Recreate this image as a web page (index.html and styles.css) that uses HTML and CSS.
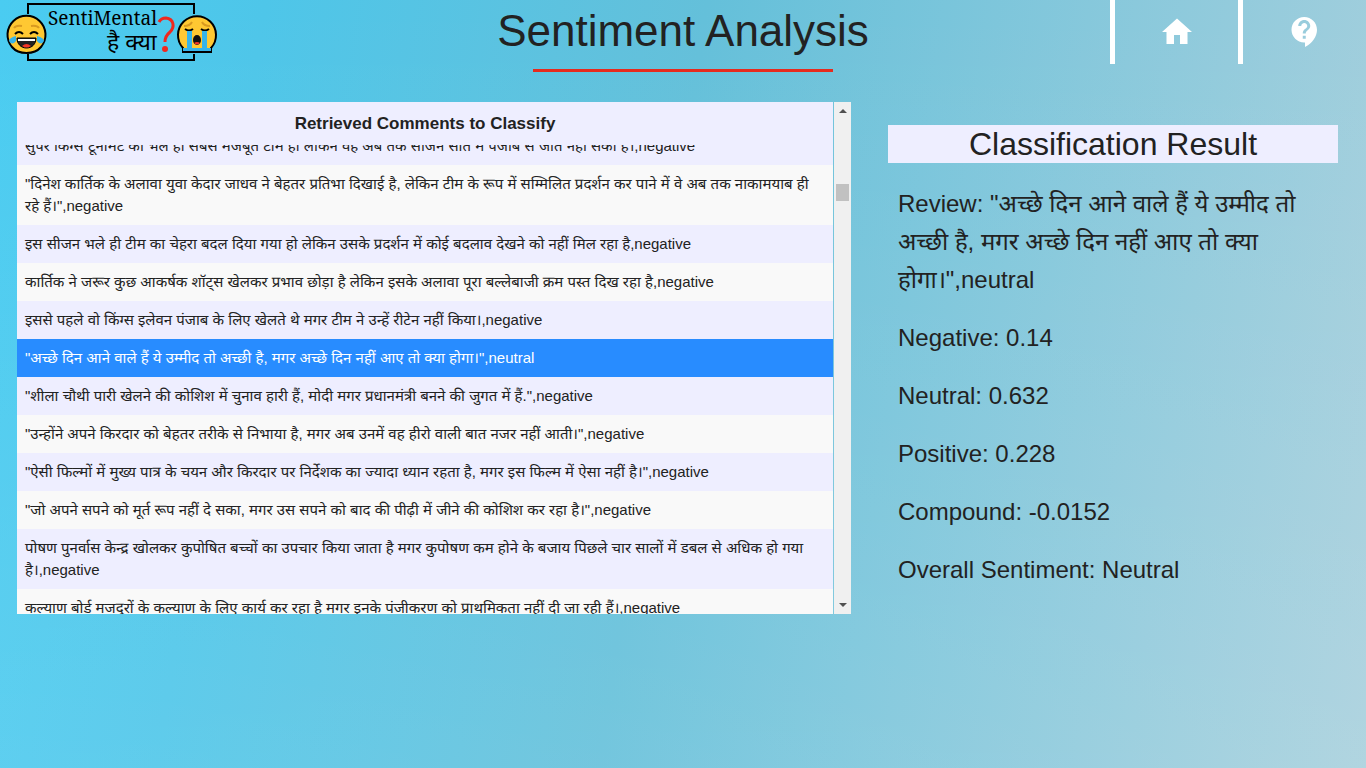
FILE: index.html
```html
<!DOCTYPE html>
<html lang="hi">
<head>
<meta charset="utf-8">
<title>Sentiment Analysis</title>
<link rel="stylesheet" href="styles.css">
</head>
<body>
<header class="topbar">
  <a class="logo" href="#" aria-label="SentiMental है क्या?">
    <svg class="logo-art" viewBox="0 0 220 66" width="220" height="66">
      <path d="M28 14V4H194V14M28 54V60H194V54" fill="none" stroke="#000" stroke-width="2"/>
      <path d="M12 47A19 19 0 1 1 41 47Q36 53 26.500 53T12 47Z" fill="#ffc832" stroke="#000" stroke-width="2"/>
      <path d="M17 38H36C36 44 32 48 26.500 48S17 44 17 38Z" fill="#222" stroke="#000" stroke-width="1"/>
      <path d="M22 46Q26.500 42 31 46Q26.500 49 22 46Z" fill="#f33527"/>
      <path d="M18 39H35V41H18Z" fill="#fff"/>
      <path d="M14 28Q16 25 22 26M31 26Q37 25 39 28" fill="none" stroke="#d99a20" stroke-width="2"/>
      <path d="M15 34Q19 30 23 34M30 34Q34 30 38 34" fill="none" stroke="#000" stroke-width="2"/>
      <path d="M16 36Q9 38 9 41Q12 46 16 41ZM37 36Q44 38 44 41Q41 46 37 41Z" fill="#36b4ea"/>
      <path d="M183 48A19 19 0 1 1 211 48V52H183Z" fill="#ffc832" stroke="#000" stroke-width="2"/>
      <path d="M184 26Q190 26 192 22M202 22Q204 26 210 26" fill="none" stroke="#d99a20" stroke-width="2"/>
      <path d="M185 29Q189 32 193 29M201 29Q205 32 209 29" fill="none" stroke="#000" stroke-width="2"/>
      <path d="M187 31H192V50H187ZM202 31H207V50H202Z" fill="#36b4ea"/>
      <path d="M183 48H211V51H183Z" fill="#36b4ea"/>
      <ellipse cx="197" cy="40" rx="4" ry="5" fill="#111"/>
      <path d="M194 43Q197 41 200 43Q197 46 194 43Z" fill="#f33527"/>
      <path d="M182 52H212" stroke="#000" stroke-width="2"/>
      <path d="M159 22Q161 18 166 18C174 19 175 27 170 32Q165 36 165 42" fill="none" stroke="#f0281e" stroke-width="3"/>
      <circle cx="165" cy="49" r="3" fill="#f0281e"/>
      <text class="logo-name" x="48" y="25">SentiMental</text>
      <text class="logo-tag" x="107" y="50">है क्या</text>
    </svg>
  </a>
  <h1 class="title">Sentiment Analysis</h1>
  <nav class="nav">
    <a class="nav-link" href="#" aria-label="Home"><svg viewBox="0 0 24 24" width="36" height="36"><path fill="#fff" d="M10 20v-6h4v6h5v-8h3L12 3 2 12h3v8z"/></svg></a>
    <a class="nav-link" href="#" aria-label="Help"><svg viewBox="0 0 24 24" width="36" height="36"><path fill="#fff" d="M11.500 2C6.810 2 3 5.810 3 10.500S6.810 19 11.500 19h.5v3c4.860-2.340 8-7 8-11.500C20 5.810 16.190 2 11.500 2zm1 14.500h-2v-2h2v2zm0-3.500h-2c0-3.250 3-3 3-5 0-1.100-.9-2-2-2s-2 .9-2 2h-2c0-2.210 1.790-4 4-4s4 1.790 4 4c0 2.500-3 2.750-3 5z"/></svg></a>
  </nav>
</header>
<main class="content">
  <section class="comments">
    <div class="scroller" id="scroller">
      <table class="table">
        <thead><tr><th>Retrieved Comments to Classify</th></tr></thead>
        <tbody>
          <tr><td>सुपर किंग्स टूर्नामेंट की भले ही सबसे मजबूत टीम हो लेकिन वह अब तक सीजन सात में पंजाब से जीत नहीं सकी है।,negative</td></tr>
          <tr><td>"दिनेश कार्तिक के अलावा युवा केदार जाधव ने बेहतर प्रतिभा दिखाई है, लेकिन टीम के रूप में सम्मिलित प्रदर्शन कर पाने में वे अब तक नाकामयाब ही रहे हैं।",negative</td></tr>
          <tr><td>इस सीजन भले ही टीम का चेहरा बदल दिया गया हो लेकिन उसके प्रदर्शन में कोई बदलाव देखने को नहीं मिल रहा है,negative</td></tr>
          <tr><td>कार्तिक ने जरूर कुछ आकर्षक शॉट्स खेलकर प्रभाव छोड़ा है लेकिन इसके अलावा पूरा बल्लेबाजी क्रम पस्त दिख रहा है,negative</td></tr>
          <tr><td>इससे पहले वो किंग्स इलेवन पंजाब के लिए खेलते थे मगर टीम ने उन्हें रीटेन नहीं किया।,negative</td></tr>
          <tr class="selected"><td>"अच्छे दिन आने वाले हैं ये उम्मीद तो अच्छी है, मगर अच्छे दिन नहीं आए तो क्या होगा।",neutral</td></tr>
          <tr><td>"शीला चौथी पारी खेलने की कोशिश में चुनाव हारी हैं, मोदी मगर प्रधानमंत्री बनने की जुगत में हैं.",negative</td></tr>
          <tr><td>"उन्होंने अपने किरदार को बेहतर तरीके से निभाया है, मगर अब उनमें वह हीरो वाली बात नजर नहीं आती।",negative</td></tr>
          <tr><td>"ऐसी फिल्मों में मुख्य पात्र के चयन और किरदार पर निर्देशक का ज्यादा ध्यान रहता है, मगर इस फिल्म में ऐसा नहीं है।",negative</td></tr>
          <tr><td>"जो अपने सपने को मूर्त रूप नहीं दे सका, मगर उस सपने को बाद की पीढ़ी में जीने की कोशिश कर रहा है।",negative</td></tr>
          <tr><td>पोषण पुनर्वास केन्द्र खोलकर कुपोषित बच्चों का उपचार किया जाता है मगर कुपोषण कम होने के बजाय पिछले चार सालों में डबल से अधिक हो गया है।,negative</td></tr>
          <tr><td>कल्याण बोर्ड मजदूरों के कल्याण के लिए कार्य कर रहा है मगर इनके पंजीकरण को प्राथमिकता नहीं दी जा रही हैं।,negative</td></tr>
        </tbody>
      </table>
    </div>
    <div class="scrollbar" aria-hidden="true"><span class="arrow arrow-up"></span><span class="thumb"></span><span class="arrow arrow-down"></span></div>
  </section>
  <section class="result">
    <h2 class="result-title">Classification Result</h2>
    <div class="result-body">
      <p>Review: "अच्छे दिन आने वाले हैं ये उम्मीद तो अच्छी है, मगर अच्छे दिन नहीं आए तो क्या होगा।",neutral</p>
      <p>Negative: 0.14</p>
      <p>Neutral: 0.632</p>
      <p>Positive: 0.228</p>
      <p>Compound: -0.0152</p>
      <p>Overall Sentiment: Neutral</p>
    </div>
  </section>
</main>
<script src="script.js"></script>
</body>
</html>
```
FILE: styles.css
```css
* { box-sizing: border-box; }
html { min-height: 100%; background: linear-gradient(rgba(255, 255, 255, 0), rgba(255, 255, 255, 0.1)), linear-gradient(98deg, #4accf1 0%, #4ec6e9 18%, #64c0da 48%, #a8d0dd 100%); }
body { margin: 0; color: #222; font-family: "Liberation Sans", "Noto Sans Devanagari", "Noto Sans", sans-serif; }
h1, h2, p { margin: 0; font-weight: 400; }
.topbar { display: grid; grid-template-columns: 1fr auto 1fr; height: 72px; }
.logo-art { display: block; }
.logo-name { font: 19px "Noto Serif", "DejaVu Serif", serif; }
.logo-tag { font: 23px "Noto Sans Devanagari", "Noto Sans", sans-serif; }
.title { display: flex; flex-direction: column; align-items: center; justify-content: space-between; padding-top: 4px; font-size: 44px; line-height: 54px; }
.title::after { content: ""; width: 300px; height: 3px; background: #e62b1e; }
.nav { display: flex; justify-content: flex-end; }
.nav-link { display: flex; align-items: center; justify-content: center; width: 128px; height: 64px; border-left: 5px solid #fff; }
.content { display: flex; align-items: flex-start; gap: 37px; padding: 30px 28px 0 17px; }
.comments { display: flex; flex: 834 1 0; height: 512px; }
.scroller { flex: 1; overflow: hidden; }
.table { width: 100%; border-collapse: collapse; background: #f9f9f9; font-size: 15px; line-height: 22px; }
.table th { position: sticky; top: 0; height: 43px; padding: 0; background: #eeeeff; font-size: 17px; }
.table td { padding: 8px; }
.table tbody tr:nth-child(odd) { background: #eeeeff; }
.table tbody .selected { background: #288cff; color: #fff; }
.scrollbar { display: flex; flex-direction: column; align-items: center; width: 17px; margin-left: 1px; padding: 7px 0; background: #f0f0f0; }
.arrow { border: 4px solid transparent; }
.arrow-up { border-top: 0; border-bottom-color: #505050; }
.arrow-down { margin-top: auto; border-bottom: 0; border-top-color: #505050; }
.thumb { width: 13px; height: 17px; margin-top: 71px; background: #c1c1c1; }
.result { flex: 450 1 0; padding-top: 23px; }
.result-title { background: #eeeeff; font-size: 32px; line-height: 38px; text-align: center; }
.result-body { display: grid; gap: 20px; padding: 22px 10px; font-size: 24px; line-height: 38px; }
```
FILE: script.js
```js
document.getElementById("scroller").scrollTop = 18;
```
